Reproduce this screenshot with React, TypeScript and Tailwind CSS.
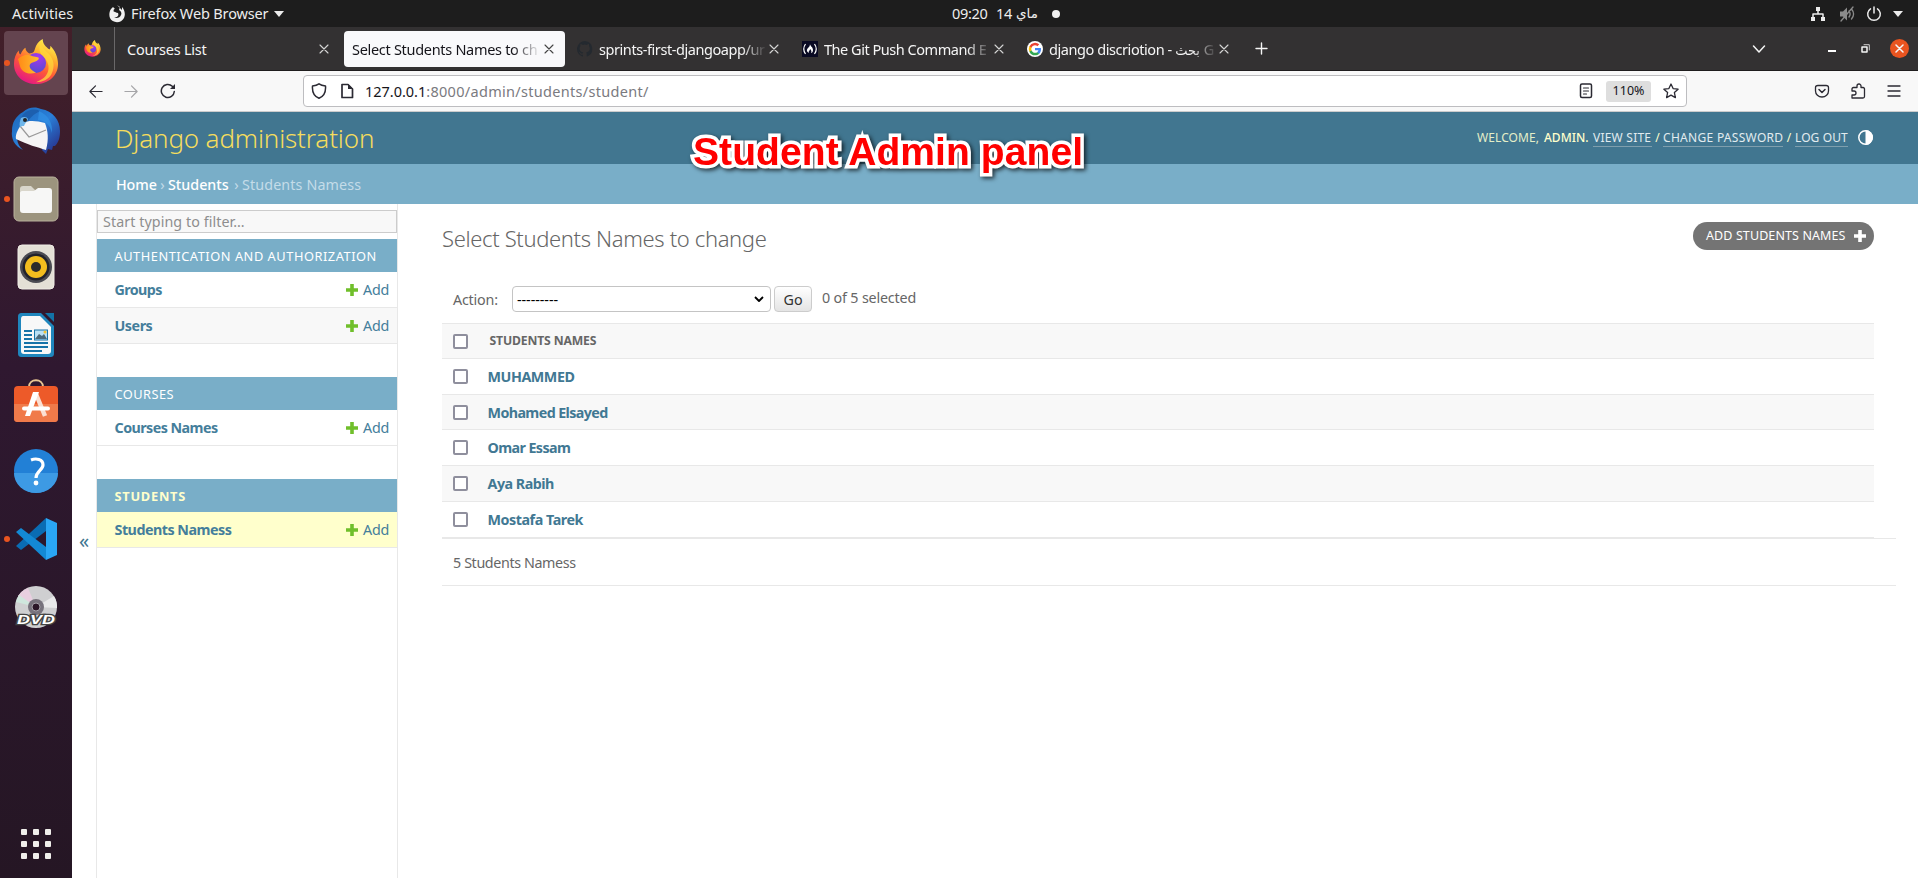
import React, { ReactNode } from "react";

const Svg = ({ s = 16, children, c = "", vb = "0 0 16 16" }: { s?: number; children: ReactNode; c?: string; vb?: string }) => (
  <svg width={s} height={s} viewBox={vb} fill="none" stroke="currentColor" strokeLinecap="round" strokeLinejoin="round" className={`shrink-0 ${c}`}>
    {children}
  </svg>
);

const Firefox = ({ s }: { s: number }) => (
  <svg width={s} height={s} viewBox="0 0 48 48" className="shrink-0">
    <defs>
      <linearGradient id="ffBody" x1="0.8" y1="0.05" x2="0.3" y2="1">
        <stop offset="0" stopColor="#fff44f" />
        <stop offset="0.3" stopColor="#ffb22e" />
        <stop offset="0.6" stopColor="#ff5a36" />
        <stop offset="1" stopColor="#e31587" />
      </linearGradient>
      <radialGradient id="ffGlobe" cx="0.6" cy="0.2" r="0.9">
        <stop offset="0" stopColor="#a737ee" />
        <stop offset="1" stopColor="#4a4fcf" />
      </radialGradient>
      <linearGradient id="ffHead" x1="0" y1="0" x2="1" y2="0">
        <stop offset="0" stopColor="#ff8a16" />
        <stop offset="1" stopColor="#ffbd2f" />
      </linearGradient>
    </defs>
    <path d="M31 0c0 5 3 8 7 11 1-1 1-2 1-4 5 5 8 12 8 19 0 12-10 21-23 21S1 38 1 26c0-6 2-11 5-14 0 3 1 4 2 4 1-3 3-6 5-7 0 3 2 5 4 6 4 0 5-1 6-5 1-4 4-8 8-10z" fill="url(#ffBody)" />
    <circle cx="24" cy="25" r="10.500" fill="url(#ffGlobe)" />
    <path d="M5 21c3-3 8-6 13-4 3 2 8 1 9 3-1 4-6 3-9 6-2 3 1 7 6 9-8 3-16-1-17-8-1-3-1-5-2-6z" fill="url(#ffHead)" />
    <path d="M30 2c-1 5 2 9 7 13 6 6 7 14 3 22-3 5-9 8-16 8 9-3 14-9 13-17-1-6-5-9-8-13-2-4-2-9 1-13z" fill="#ffd83b" opacity="0.75" />
  </svg>
);

const Thunderbird = () => (
  <svg width="50" height="50" viewBox="0 0 50 50">
    <defs>
      <linearGradient id="tb" x1="0" y1="0" x2="1" y2="1">
        <stop offset="0" stopColor="#1b66b8" />
        <stop offset="0.5" stopColor="#2a7fd8" />
        <stop offset="1" stopColor="#27247f" />
      </linearGradient>
    </defs>
    <path d="M12 6C18 0 26 1 30 3c12 2 19 11 19 22 0 6-1 11-5 15l-2 0-1 4-4-1-2 5-4-4c2-7 3-14 2-20l-22-3C4 29 5 38 12 44 3 40 0 32 1 25 1 16 5 10 12 6z" fill="url(#tb)" />
    <path d="M11 10c4-6 12-8 18-5-6 3-11 7-13 13-3 1-5 2-6 4-1-4-1-8 1-12z" fill="#1d5fae" />
    <path d="M28 5c9 4 14 12 13 22-2-8-6-12-14-13z" fill="#3292e6" opacity="0.7" />
    <path d="M12 17c6-3 14-2 22 0 3 8 4 16 1 27-9-3-18-5-30-11-1-5 3-12 7-16z" fill="#f5f5f5" />
    <path d="M9 20l9 11 17-7" fill="none" stroke="#999" strokeWidth="1.200" />
    <path d="M10 12c3-2 6-1 7 1-1 3-3 4-4 7-2 0-3 0-4 1-1-3 0-6 1-9z" fill="#6fb6ea" />
    <circle cx="14" cy="14" r="2" fill="#222" />
  </svg>
);

const Files = () => (
  <svg width="46" height="46" viewBox="0 0 46 46">
    <rect x="1" y="1" width="44" height="44" rx="5" fill="#9c947e" stroke="#b9b19c" />
    <path d="M7 13c0-2 1-3 3-3h8l4 4v8H7z" fill="#d9d6cb" />
    <path d="M7 17c0-1 1-2 2-2h12l4-3h11c2 0 3 1 3 3v19c0 2-1 3-3 3H10c-2 0-3-1-3-3z" fill="#f7f7f6" />
  </svg>
);

const Rhythmbox = () => (
  <svg width="38" height="46" viewBox="0 0 38 46">
    <rect x="1" y="1" width="36" height="44" rx="4" fill="#e4e0d6" stroke="#f0ede6" />
    <circle cx="19" cy="23" r="16" fill="#4b4b52" />
    <circle cx="19" cy="23" r="13.500" fill="#22232c" />
    <circle cx="19" cy="23" r="11" fill="#f2bd1e" />
    <circle cx="19" cy="23" r="5" fill="#2b2b2b" />
  </svg>
);

const Writer = () => (
  <svg width="38" height="46" viewBox="0 0 38 46">
    <path d="M5 1h19l13 13v27c0 3-1 4-4 4H5c-3 0-4-1-4-4V5c0-3 1-4 4-4z" fill="#1f86bd" />
    <path d="M6 4h17l11 11v24c0 2-1 3-3 3H7c-2 0-3-1-3-3V7c0-2 1-3 2-3z" fill="#f8f8f8" />
    <path d="M28 1h9v9z" fill="#1373a7" />
    <path d="M7 19h8M7 23h8M7 27h8M7 31h24M7 35h24M7 39h18" stroke="#1773a8" strokeWidth="1.800" />
    <rect x="17.500" y="18" width="13" height="10" fill="#b9e0f5" stroke="#1773a8" />
    <path d="M18 27l4-5 3 2 2-2 3 5z" fill="#4b6a7c" />
    <circle cx="28" cy="20" r="1.500" fill="#f1c232" />
  </svg>
);

const Software = () => (
  <svg width="46" height="44" viewBox="0 0 46 44">
    <path d="M16 8c0-9 14-9 14 0" fill="none" stroke="#e9c793" strokeWidth="2" />
    <rect x="1" y="7" width="44" height="36" rx="4" fill="#ed5a29" />
    <path d="M1 25h44v14c0 3-1 4-4 4H5c-3 0-4-1-4-4z" fill="#f07a4a" />
    <path d="M23 15l9 22" stroke="#fbe0d3" strokeWidth="4.500" />
    <path d="M20 13h6l-9 24h-5z" fill="#fff" />
    <path d="M11 29.500h24" stroke="#fff" strokeWidth="4" strokeLinecap="round" />
  </svg>
);

const Help = () => (
  <svg width="46" height="46" viewBox="0 0 46 46">
    <circle cx="23" cy="23" r="22" fill="#2280d6" />
    <path d="M1 25h44a22 20 0 0 1-44 0z" fill="#3d9ae4" />
    <path d="M18 12c5-2 12-1 12 5 0 5-7 6-7 13" fill="none" stroke="#fff" strokeWidth="3.200" />
    <circle cx="23" cy="35" r="2.400" fill="#fff" />
  </svg>
);

const VsCode = () => (
  <svg width="44" height="44" viewBox="0 0 44 44">
    <path d="M2 29l5 4L32 14V1z" fill="#0a6cb3" />
    <path d="M2 15l5-4 25 19v13z" fill="#1389d4" />
    <path d="M32 1l11 5v32l-11 5z" fill="#2aa6f4" />
  </svg>
);

const Dvd = () => (
  <svg width="44" height="46" viewBox="0 0 44 46">
    <circle cx="22" cy="22" r="21" fill="#cfcfd1" />
    <path d="M22 22L4 11A21 21 0 0 1 14 3z" fill="#e8cfe0" />
    <path d="M22 22L2 17A21 21 0 0 1 5 10z" fill="#cfe6dd" />
    <path d="M22 22l18-11a21 21 0 0 1 3 12z" fill="#e9e9ea" />
    <circle cx="22" cy="22" r="8" fill="#77727c" />
    <circle cx="22" cy="22" r="4" fill="#2b1728" stroke="#a5a1a8" />
    <text x="22" y="39" textAnchor="middle" fontFamily="Liberation Sans" fontWeight="bold" fontStyle="italic" fontSize="13" textLength="38" lengthAdjust="spacingAndGlyphs" fill="#fff" stroke="#444" strokeWidth="2.500" paintOrder="stroke">DVD</text>
  </svg>
);

const Slot = ({ children, h, dot, active }: { children: ReactNode; h: string; dot?: boolean; active?: boolean }) => (
  <div className={`relative flex w-[72px] shrink-0 items-center justify-center ${h}`}>
    {active && <div className="absolute inset-x-1 inset-y-0 rounded-[4px] bg-[#64444f]" />}
    {dot && <div className="absolute left-1 top-1/2 h-[6px] w-[6px] -translate-y-1/2 rounded-full bg-[#e95420]" />}
    <div className="relative">{children}</div>
  </div>
);

const Dock = () => (
  <nav className="flex w-[72px] shrink-0 flex-col bg-linear-to-b from-[#421f29] via-[#2f1830] via-40% to-[#251624] pt-1">
    <Slot h="h-16 pb-[3px]" active dot><Firefox s={46} /></Slot>
    <Slot h="h-[72px]"><Thunderbird /></Slot>
    <Slot h="h-16" dot><Files /></Slot>
    <Slot h="h-[72px]"><Rhythmbox /></Slot>
    <Slot h="h-16"><Writer /></Slot>
    <Slot h="h-[68px]"><Software /></Slot>
    <Slot h="h-[72px]"><Help /></Slot>
    <Slot h="h-16" dot><VsCode /></Slot>
    <Slot h="h-[72px] pt-[2px]"><Dvd /></Slot>
    <div className="mt-auto grid grid-cols-3 gap-[6px] self-center pb-[19px]">
      {[0, 1, 2, 3, 4, 5, 6, 7, 8].map((i) => <span key={i} className="h-[6px] w-[6px] rounded-[1px] bg-[#f0efeb]" />)}
    </div>
  </nav>
);

const TopBar = () => (
  <header className="relative flex h-[27px] shrink-0 items-center bg-[#1d1d1d] text-[14.500px] leading-[27px] text-[#ededed]">
    <span className="ml-3 w-[97px] tracking-[0.100px]">Activities</span>
    <svg width="16" height="18" viewBox="0 0 16 18" fill="#f0f0f0">
      <path d="M8 0l3 2-1 3c2 1 3 3 2 5-1 3-5 4-7 2 4 1 5-2 4-4C7 8 6 6 5 7 4 5 5 4 6 4L4 2 2 4C0 7 0 11 1 13c2 5 11 6 14 0 2-4 0-9-2-11l0 3z" />
    </svg>
    <span className="ml-[6px] w-[139px] tracking-[-0.150px]">Firefox Web Browser</span>
    <svg width="10" height="6" viewBox="0 0 10 6" className="ml-1" fill="#ededed"><path d="M0 0h10L5 6z" /></svg>
    <div className="absolute left-[952px] top-0 flex h-[27px] items-center">
      <span className="w-11 tracking-[-0.300px]">09:20</span>
      <span className="w-5 tracking-[-0.300px]">14</span>
      <span className="w-[36px] font-['DejaVu_Sans',sans-serif] text-[13.500px]">ماي</span>
      <span className="h-2 w-2 rounded-full bg-[#f0f0f0]" />
    </div>
    <div className="ml-auto flex items-center pr-[15px]">
      <Svg c="mr-[13px]"><path d="M8 4v4M3 11V8h10v3" strokeWidth="1.500" /><path d="M6 1h4v4H6zM1 11h4v4H1zM11 11h4v4h-4z" fill="currentColor" stroke="none" /></Svg>
      <Svg c="mr-[11px] text-[#8b8b8b]"><path d="M1 5.500h3l4-4v13l-4-4H1z" fill="currentColor" stroke="none" /><path d="M10 5c1.500 2 1.500 4 0 6M12.500 3c2.500 3 2.500 7 0 10M14 1L2 15" strokeWidth="1.300" /></Svg>
      <Svg c="mr-[11px]"><path d="M8 1v6M4.500 2.800a6.300 6.300 0 1 0 7 0" strokeWidth="1.500" /></Svg>
      <svg width="10" height="6" viewBox="0 0 10 6" fill="#ededed"><path d="M0 0h10L5 6z" /></svg>
    </div>
  </header>
);

const X = ({ c = "text-[#d5d5d5]" }: { c?: string }) => <Svg s={10} c={c} vb="0 0 10 10"><path d="M1 1l8 8M9 1L1 9" strokeWidth="1.100" /></Svg>;

const Tab = ({ icon, label, w, ls }: { icon: ReactNode; label: ReactNode; w: string; ls: string }) => (
  <div className={`flex h-full shrink-0 items-center pl-3 ${w}`}>
    <span className="w-4 shrink-0">{icon}</span>
    <div className={`ml-[6px] mr-[2px] w-[168px] whitespace-nowrap pt-[2px] mask-r-from-85% ${ls}`}>{label}</div>
    <X />
  </div>
);

const TabBar = () => (
  <div className="flex h-11 shrink-0 items-center border-b border-[#1f1d1e] bg-[#333132] text-[14.500px] text-[#f5f5f5]">
    <div className="flex h-full w-[43px] shrink-0 items-center border-r border-[#6a6869] pl-3"><Firefox s={17} /></div>
    <div className="flex w-[229px] shrink-0 items-center justify-between pl-3 pr-[15px]"><span className="pt-[2px] tracking-[-0.220px]">Courses List</span><X /></div>
    <div className="flex h-9 w-[221px] shrink-0 items-center rounded-[4px] bg-[#f9f9fb] pl-2 text-[#15141a]">
      <div className="mr-[3px] w-[189px] whitespace-nowrap pt-[2px] tracking-[-0.300px] mask-r-from-85%">Select Students Names to ch</div>
      <X c="text-[#444]" />
    </div>
    <Tab w="w-[225px]" ls="tracking-[-0.430px]" label="sprints-first-djangoapp/ur" icon={
      <svg width="16" height="16" viewBox="0 0 16 16" fill="#24292f"><path d="M8 0a8 8 0 0 0-2.500 15.600c.4 0 .5-.2.500-.4v-1.500c-2 .5-2.700-.5-2.900-1-.1-.3-.5-1-.9-1.200-.3-.2-.7-.6 0-.6.600 0 1.100.6 1.200.8.700 1.200 1.900.9 2.400.7 0-.5.200-.9.500-1.100-1.900-.2-3.700-.9-3.700-4 0-.9.300-1.600.8-2.100 0-.2-.300-1 .1-2.100 0 0 .7-.2 2.200.8a7.500 7.500 0 0 1 4 0c1.500-1 2.200-.8 2.200-.8.4 1.100.1 1.900.1 2.100.5.6.800 1.300.800 2.100 0 3.100-1.900 3.800-3.700 4 .3.300.6.700.6 1.500v2.200c0 .2.100.5.500.4A8 8 0 0 0 8 0z" /></svg>} />
    <Tab w="w-[225px]" ls="tracking-[-0.470px]" label="The Git Push Command E" icon={
      <svg width="16" height="16" viewBox="0 0 16 16"><rect width="16" height="16" fill="#0a0a23" /><path d="M3.500 3Q0 8 3.500 13M12.500 3Q16 8 12.500 13" stroke="#fff" fill="none" strokeWidth="1.200" /><path d="M8 3c0 2 3 3 3 6 0 2-1 3-2 3 1-2 0-3-1-4 0 2-2 2-1 4-2-1-3-3-1-5 1-1 2-2 2-4z" fill="#fff" /></svg>} />
    <Tab w="w-[219px]" ls="tracking-[-0.430px]" label={<span>django discriotion - <bdi className="font-['DejaVu_Sans',sans-serif] text-[13px]">بحث</bdi> G</span>} icon={
      <svg width="16" height="16" viewBox="0 0 48 48"><circle cx="24" cy="24" r="24" fill="#fff" /><path d="M42 24.500c0-1.300-.1-2.500-.4-3.500H24v7h10.300c-.4 2.300-1.700 4-3.500 5.300v5h6C40 35 42 30 42 24.500z" fill="#4285f4" /><path d="M24 43c5 0 9.300-1.700 12.500-4.700l-6-4.700C29 34.700 27 35.500 24 35.500c-5 0-9-3.200-10.500-7.700h-6v5C10.500 39 17 43 24 43z" fill="#34a853" /><path d="M13.500 27.800a12 12 0 0 1 0-7.500v-5h-6a19 19 0 0 0 0 17.300z" fill="#fbbc05" /><path d="M24 12.500c3 0 5.300 1 7.300 3l5.400-5.500A19 19 0 0 0 7.500 15.500l6 4.800C15 15.700 19 12.500 24 12.500z" fill="#ea4335" /></svg>} />
    <Svg s={13} c="ml-[21px]" vb="0 0 13 13"><path d="M6.500 1v11M1 6.500h11" strokeWidth="1.400" /></Svg>
    <div className="ml-auto flex items-center pr-[9px]">
      <Svg s={14} c="mr-[62px]" vb="0 0 14 14"><path d="M1.500 4L7 10l5.500-6" strokeWidth="1.500" /></Svg>
      <span className="mr-[25px] mt-[5px] h-[1.500px] w-2 bg-white" />
      <Svg s={9} c="mr-[20px]" vb="0 0 9 9"><path d="M1 3h5v5H1z" strokeWidth="1.500" /><path d="M3 .7h5.300V6" strokeWidth="0.800" /></Svg>
      <span className="flex h-[19px] w-[19px] items-center justify-center rounded-full bg-[#e95420]"><Svg s={9} vb="0 0 9 9"><path d="M1 1l7 7M8 1L1 8" strokeWidth="1.500" /></Svg></span>
    </div>
  </div>
);

const Toolbar = () => (
  <div className="flex h-[41px] shrink-0 items-center border-b border-[#ccc] bg-[#f8f8f8] pl-4 text-[#2b2a33]">
    <Svg s={15} c="mr-[21px]"><path d="M15 8H2M8 2L2 8l6 6" strokeWidth="1.300" /></Svg>
    <Svg s={15} c="mr-[21px] text-[#a5a5a8]"><path d="M1 8h13M8 2l6 6-6 6" strokeWidth="1.300" /></Svg>
    <Svg c="mr-[127px]"><path d="M14.300 8.500a6.500 6.500 0 1 1-2-5.200L14 5" strokeWidth="1.500" /><path d="M15 1v5h-5z" fill="currentColor" stroke="none" /></Svg>
    <div className="flex h-8 w-[1384px] items-center rounded-[4px] border border-[#bdbdc0] bg-white pl-[7px] text-[14.500px]">
      <Svg c="mr-3"><path d="M8 .8c2 1.500 4.500 2 6.500 2.200C15 9 12.500 13.500 8 15.300 3.500 13.500 1 9 1.500 3 3.500 2.800 6 2.300 8 .8z" strokeWidth="1.500" /></Svg>
      <Svg c="mr-[10px]"><path d="M3 1.500h6L13.500 6v8.500H3z" strokeWidth="1.700" /><path d="M9 1l5 5H9z" fill="currentColor" stroke="none" /></Svg>
      <span className="pt-[2px] tracking-[-0.020px] text-[#15141a]">127.0.0.1</span>
      <span className="pt-[2px] tracking-[0.300px] text-[#7a7a80]">:8000/admin/students/student/</span>
      <div className="ml-auto flex items-center pr-[7px]">
        <Svg c="mr-3"><rect x="2.500" y="1" width="11" height="13.500" rx="1.500" strokeWidth="1.500" /><path d="M5.500 5h5M5.500 8h5M5.500 11h3" strokeWidth="1.200" /></Svg>
        <span className="mr-3 flex h-[21px] w-[45px] items-center justify-center rounded-[3px] bg-[#dedede] pt-px text-[12.500px] text-[#15141a]">110%</span>
        <Svg><path d="M8 1l2.100 4.600 5 .6-3.700 3.400 1 5L8 12.100 3.600 14.600l1-5L.9 6.200l5-.6z" strokeWidth="1.300" /></Svg>
      </div>
    </div>
    <div className="ml-auto flex items-center pr-4">
      <Svg c="mr-5"><path d="M4 2.500h8c1.500 0 2.500.8 2.500 2V8a6.500 6 0 0 1-13 0V4.500c0-1.200 1-2 2.500-2z" strokeWidth="1.300" /><path d="M5 6.500l3 3 3-3" strokeWidth="1.500" /></Svg>
      <Svg c="mr-5"><path d="M2 15h11c1 0 1.500-.5 1.500-1.500V6c0-1-.5-1.500-1.500-1.500h-2V3a2 2 0 0 0-4 0v1.500H3.500C2.500 4.500 2 5 2 6v2h2a1.800 1.800 0 0 1 0 4H2z" strokeWidth="1.300" /></Svg>
      <Svg><path d="M2 3h12M2 8h12M2 13h12" strokeWidth="1.300" /></Svg>
    </div>
  </div>
);

const Plus = ({ c }: { c: string }) => <svg width="12" height="12" viewBox="0 0 12 12" className={`shrink-0 ${c}`} fill="currentColor"><path d="M4.200 0h3.600v4.200H12v3.600H7.800V12H4.200V7.800H0V4.200h4.200z" /></svg>;

const Module = ({ title, rows, current, ls = "" }: { title: string; rows: { name: string; ls: string }[]; current?: boolean; ls?: string }) => (
  <section className="mb-[33px]">
    <h2 className={`flex h-[33px] items-center bg-[#79aec8] pl-[17.500px] pt-[2px] text-[12.800px] uppercase ${ls} ${current ? "font-bold text-[#ffffcc]" : "text-white"}`}>{title}</h2>
    {rows.map((r, i) => (
      <div key={r.name} className={`flex h-9 items-center border-b border-[#e8e8e8] pl-[17.500px] pr-[9px] text-[14.300px] text-[#447e9b] ${current ? "bg-[#ffffcc]" : i % 2 ? "bg-[#f8f8f8]" : ""}`}>
        <b className={`grow font-bold ${r.ls}`}>{r.name}</b>
        <Plus c="mr-[5px] text-[#70bf2b]" />
        <span className="w-[25px] tracking-[-0.200px]">Add</span>
      </div>
    ))}
  </section>
);

const Sidebar = () => (
  <aside className="flex shrink-0">
    <div className="flex w-6 items-center justify-center pb-[2px] text-[20px] text-[#417690]"><span className="h-[30px] leading-[32px]">«</span></div>
    <div className="w-[302px] border-x border-[#e8e8e8] pt-[6px]">
      <div className="mb-[6px] h-[23px] border border-[#ccc] bg-[#f8f8f8] pl-[5px] text-[14.300px] leading-[22px] tracking-[0.070px] text-[#8e8e8e]">Start typing to filter…</div>
      <Module title="Authentication and Authorization" ls="tracking-[0.540px]" rows={[{ name: "Groups", ls: "tracking-[-0.600px]" }, { name: "Users", ls: "tracking-[-0.450px]" }]} />
      <Module title="Courses" ls="tracking-[0.450px]" rows={[{ name: "Courses Names", ls: "tracking-[-0.550px]" }]} />
      <Module title="Students" current ls="tracking-[0.750px]" rows={[{ name: "Students Namess", ls: "tracking-[-0.500px]" }]} />
    </div>
  </aside>
);

const Check = () => <span className="ml-[11px] mr-[19.500px] h-[15px] w-[15px] shrink-0 rounded-[2px] border-2 border-[#8f8f9d] bg-white" />;

const students = [
  { name: "MUHAMMED", ls: "tracking-[-0.450px]", h: "h-9" },
  { name: "Mohamed Elsayed", ls: "tracking-[-0.600px]", h: "h-[35px]" },
  { name: "Omar Essam", ls: "tracking-[-0.600px]", h: "h-9" },
  { name: "Aya Rabih", ls: "tracking-[-0.500px]", h: "h-9" },
  { name: "Mostafa Tarek", ls: "tracking-[-0.450px]", h: "h-9" },
];

const Content = () => (
  <main className="ml-[44px] mr-[22px] grow text-[14.300px] text-[#666]">
    <div className="mr-[22px] flex h-[83px] items-start justify-between pt-[18px]">
      <h1 className="-mt-[1px] text-[22px] font-light leading-[34px] tracking-[-0.350px]">Select Students Names to change</h1>
      <a className="flex h-7 w-[181px] items-center rounded-full bg-[#747474] pl-[13px] pr-2 pt-px text-[12.500px] uppercase text-white"><span className="w-[147px] tracking-[0.100px]">Add Students Names</span><Plus c="ml-auto mb-px" /></a>
    </div>
    <div className="flex h-[36px] items-start pl-[11px]">
      <span className="mt-[2px] w-[59px] leading-[22px] tracking-[-0.200px]">Action:</span>
      <div className="mr-[3px] -mt-px flex h-[26px] w-[259px] items-center justify-between rounded-[4px] border border-[#c4c4c4] bg-white pl-1 pr-[5px] text-black">
        <span className="pt-px tracking-[-0.050px]">---------</span>
        <Svg s={12} vb="0 0 12 12"><path d="M2 4l4 4 4-4" strokeWidth="1.800" strokeLinecap="butt" /></Svg>
      </div>
      <button className="-mt-px flex h-[26px] w-[38px] items-center justify-center rounded-[4px] border border-[#ccc] bg-linear-to-b from-white to-[#e4e4e4] pt-px text-[#333]">Go</button>
      <span className="ml-[10px] leading-[22px] tracking-[-0.170px]">0 of 5 selected</span>
    </div>
    <div className="mr-[22px]">
      <div className="flex h-9 items-center border-y border-[#e8e8e8] bg-[#f8f8f8]"><Check /><b className="pl-[2px] text-[12.200px] uppercase tracking-[-0.150px]">Students Names</b></div>
      {students.map((s, i) => (
        <div key={s.name} className={`flex items-center border-b border-[#e8e8e8] ${s.h} ${i % 2 ? "bg-[#f8f8f8]" : ""}`}><Check /><b className={`pt-px font-bold text-[#417893] ${s.ls}`}>{s.name}</b></div>
      ))}
    </div>
    <div className="flex h-12 items-center border-y border-[#e8e8e8] pl-[11px] pt-[2px] tracking-[-0.380px]">5 Students Namess</div>
  </main>
);

export default function App() {
  return (
    <div className="flex h-[878px] w-[1918px] flex-col overflow-hidden bg-white font-['Noto_Sans','Open_Sans',sans-serif]">
      <TopBar />
      <div className="flex min-h-0 grow">
        <Dock />
        <div className="relative flex w-[1846px] flex-col">
          <TabBar />
          <Toolbar />
          <div className="flex h-[52px] shrink-0 items-center justify-between bg-[#417690] pl-[43px] pr-[45px] text-[#ffffcc]">
            <h1 className="text-[26px] font-light leading-[50px] tracking-[-0.150px] text-[#f5dd5d]">Django administration</h1>
            <div className="flex items-center whitespace-nowrap pb-px text-[12px] uppercase leading-[17px]">
              <span className="w-[67px] tracking-[0.100px] text-[#e4eec8]">Welcome,</span>
              <span className="w-[49px] font-medium">Admin.</span>
              <span className="w-[59px] border-b border-[#7f9fae] tracking-[0.220px] text-[#e2ecef]">View site</span>
              <span className="w-[11px] text-center">/</span>
              <span className="w-[120px] border-b border-[#7f9fae] tracking-[0.300px] text-[#e2ecef]">Change password</span>
              <span className="w-[12px] text-center">/</span>
              <span className="w-[53px] border-b border-[#7f9fae] tracking-[0.100px] text-[#e2ecef]">Log out</span>
              <svg width="15" height="15" viewBox="0 0 15 15" className="ml-[10px]"><circle cx="7.500" cy="7.500" r="6.700" fill="none" stroke="#fff" strokeWidth="1.500" /><path d="M7.500 0a7.500 7.500 0 0 1 0 15z" fill="#fff" /></svg>
            </div>
          </div>
          <div className="flex h-10 shrink-0 items-center bg-[#79aec8] pl-[44px] pt-px text-[14.300px] text-[#c4dce8]">
            <span className="w-[41px] font-medium tracking-[-0.100px] text-white">Home</span><span className="w-[11px] text-center">›</span>
            <span className="w-[63px] font-medium text-white">Students</span><span className="w-[11px] text-center">›</span>
            <span className="tracking-[0.130px]">Students Namess</span>
          </div>
          <div className="flex min-h-0 grow"><Sidebar /><Content /></div>
          <div className="absolute left-[621px] top-[102px] whitespace-nowrap font-['Liberation_Sans',sans-serif] text-[39px] font-bold leading-[46px] tracking-[0.080px] text-[#ff0000] drop-shadow-[2px_2px_2px_rgb(0_0_0/0.700)] [-webkit-text-stroke:7px_white] [paint-order:stroke_fill]">Student Admin panel</div>
        </div>
      </div>
    </div>
  );
}
